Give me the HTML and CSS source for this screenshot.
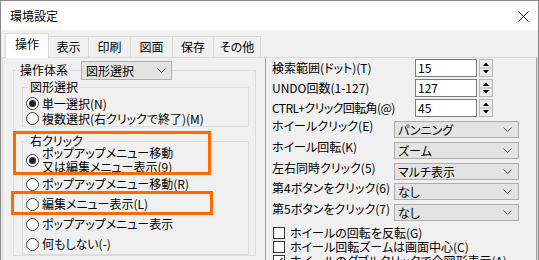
FILE: index.html
```html
<!DOCTYPE html>
<html lang="ja">
<head>
<meta charset="utf-8">
<title>環境設定</title>
<link rel="stylesheet" href="styles.css">
</head>
<body>
<div class="window">
  <div class="titlebar">
    <span class="title">環境設定</span>
    <svg class="close" width="11" height="11" viewBox="0 0 11 11"><path d="M0.5 0.5L10.5 10.5M10.5 0.5L0.5 10.5" stroke="#000" stroke-width="1" fill="none"/></svg>
  </div>
  <div class="client">
    <div class="tabs">
      <div class="tab active w-a">操作</div>
      <div class="tab w-b">表示</div>
      <div class="tab w-c">印刷</div>
      <div class="tab w-c">図面</div>
      <div class="tab w-d">保存</div>
      <div class="tab w-e">その他</div>
    </div>
    <div class="panel">
      <div class="left">
        <div class="combo system">
          <span>図形選択</span>
          <svg class="chev" width="9" height="5" viewBox="0 0 9 5"><polyline points="0.5,0.5 4.5,4.5 8.5,0.5" fill="none" stroke="#555" stroke-width="1"/></svg>
        </div>
        <fieldset class="group outer">
          <legend>操作体系</legend>
          <fieldset class="group inner sel">
            <legend>図形選択</legend>
            <div class="radio"><span class="rb on"></span><span>単一選択(N)</span></div>
            <div class="radio"><span class="rb"></span><span>複数選択(右クリックで終了)(M)</span></div>
          </fieldset>
          <fieldset class="group inner rclick">
            <legend>右クリック</legend>
            <div class="radio multi"><span class="rb on"></span><span>ポップアップメニュー移動<br>又は編集メニュー表示(9)</span></div>
            <div class="radio tall"><span class="rb"></span><span>ポップアップメニュー移動(R)</span></div>
            <div class="radio tall"><span class="rb"></span><span>編集メニュー表示(L)</span></div>
            <div class="radio tall"><span class="rb"></span><span>ポップアップメニュー表示</span></div>
            <div class="radio tall"><span class="rb"></span><span>何もしない(-)</span></div>
          </fieldset>
        </fieldset>
      </div>
      <div class="right">
        <div class="num-row first">
          <span class="nlabel">検索範囲(ドット)(T)</span>
          <span class="edit">15</span>
          <svg class="spin" width="14" height="18" viewBox="0 0 14 18"><rect x="0.5" y="0.5" width="13" height="17" fill="#ececec" stroke="#b9b9b9"/><line x1="1" y1="9" x2="13" y2="9" stroke="#b9b9b9"/><path d="M4 7H10L7 3.5Z" fill="#000"/><path d="M4 11H10L7 14.5Z" fill="#000"/></svg>
        </div>
        <div class="num-row">
          <span class="nlabel">UNDO回数(1-127)</span>
          <span class="edit">127</span>
          <svg class="spin" width="14" height="18" viewBox="0 0 14 18"><rect x="0.5" y="0.5" width="13" height="17" fill="#ececec" stroke="#b9b9b9"/><line x1="1" y1="9" x2="13" y2="9" stroke="#b9b9b9"/><path d="M4 7H10L7 3.5Z" fill="#000"/><path d="M4 11H10L7 14.5Z" fill="#000"/></svg>
        </div>
        <div class="num-row">
          <span class="nlabel tight">CTRL+クリック回転角(@)</span>
          <span class="edit">45</span>
          <svg class="spin" width="14" height="18" viewBox="0 0 14 18"><rect x="0.5" y="0.5" width="13" height="17" fill="#ececec" stroke="#b9b9b9"/><line x1="1" y1="9" x2="13" y2="9" stroke="#b9b9b9"/><path d="M4 7H10L7 3.5Z" fill="#000"/><path d="M4 11H10L7 14.5Z" fill="#000"/></svg>
        </div>
        <div class="dd-row first">
          <span class="dlabel">ホイールクリック(E)</span>
          <div class="combo dd"><span>パンニング</span><svg class="chev" width="9" height="5" viewBox="0 0 9 5"><polyline points="0.5,0.5 4.5,4.5 8.5,0.5" fill="none" stroke="#555" stroke-width="1"/></svg></div>
        </div>
        <div class="dd-row">
          <span class="dlabel">ホイール回転(K)</span>
          <div class="combo dd"><span>ズーム</span><svg class="chev" width="9" height="5" viewBox="0 0 9 5"><polyline points="0.5,0.5 4.5,4.5 8.5,0.5" fill="none" stroke="#555" stroke-width="1"/></svg></div>
        </div>
        <div class="dd-row">
          <span class="dlabel">左右同時クリック(5)</span>
          <div class="combo dd"><span>マルチ表示</span><svg class="chev" width="9" height="5" viewBox="0 0 9 5"><polyline points="0.5,0.5 4.5,4.5 8.5,0.5" fill="none" stroke="#555" stroke-width="1"/></svg></div>
        </div>
        <div class="dd-row">
          <span class="dlabel">第4ボタンをクリック(6)</span>
          <div class="combo dd"><span>なし</span><svg class="chev" width="9" height="5" viewBox="0 0 9 5"><polyline points="0.5,0.5 4.5,4.5 8.5,0.5" fill="none" stroke="#555" stroke-width="1"/></svg></div>
        </div>
        <div class="dd-row">
          <span class="dlabel">第5ボタンをクリック(7)</span>
          <div class="combo dd"><span>なし</span><svg class="chev" width="9" height="5" viewBox="0 0 9 5"><polyline points="0.5,0.5 4.5,4.5 8.5,0.5" fill="none" stroke="#555" stroke-width="1"/></svg></div>
        </div>
        <div class="checks">
          <div class="check"><span class="cb"></span><span>ホイールの回転を反転(G)</span></div>
          <div class="check"><span class="cb"></span><span>ホイール回転ズームは画面中心(C)</span></div>
          <div class="check"><span class="cb"><svg width="10" height="10" viewBox="0 0 10 10"><polyline points="1.5,5 4,7.5 8.5,2" fill="none" stroke="#333" stroke-width="1.3"/></svg></span><span>ホイールのダブルクリックで全図形表示(A)</span></div>
        </div>
      </div>
    </div>
  </div>
  <div class="mark mark1"></div>
  <div class="mark mark2"></div>
</div>
</body>
</html>
```
FILE: styles.css
```css
* { box-sizing: border-box; }
html, body { margin: 0; padding: 0; }
body {
  width: 539px;
  height: 260px;
  overflow: hidden;
  background: #fff;
  font-family: "Noto Sans CJK JP", "Noto Sans", sans-serif;
  font-size: 12px;
  color: #000;
  font-feature-settings: "palt";
}
.window {
  position: relative;
  width: 539px;
  height: 260px;
  border: 1px solid #8a8a8a;
  border-bottom: none;
  background: #f0f0f0;
  display: flex;
  flex-direction: column;
  overflow: hidden;
}
.titlebar {
  height: 29px;
  flex: none;
  background: #fff;
  display: flex;
  align-items: center;
  justify-content: space-between;
  padding: 0 9px;
}
.title { line-height: 14px; }
.close { display: block; margin-top: 2px; }
.client {
  flex: 1;
  display: flex;
  flex-direction: column;
  padding: 3px 0 0 1px;
  min-height: 0;
}
.tabs {
  display: flex;
  align-items: flex-end;
  height: 24px;
  padding-left: 3px;
  flex: none;
}
.tab {
  height: 21px;
  border: 1px solid #d9d9d9;
  border-bottom: none;
  background: #f0f0f0;
  text-align: center;
  line-height: 14px;
  padding-top: 3px;
  margin-left: -1px;
}
.tab.active {
  height: 25px;
  margin-bottom: -1px;
  margin-left: 0;
  background: #fff;
  position: relative;
  z-index: 1;
  padding-top: 3px;
}
.w-a { width: 44px; }
.w-b { width: 41px; }
.w-c { width: 43px; }
.w-d { width: 42px; }
.w-e { width: 48px; }
.panel {
  flex: 1;
  display: flex;
  border: 1px solid #d9d9d9;
  border-bottom: none;
  background: #f0f0f0;
  min-height: 0;
}
.left {
  width: 262px;
  flex: none;
  position: relative;
  padding-left: 10px;
}
.group {
  border: 1px solid #dcdcdc;
  margin: 0;
  min-width: 0;
}
.group legend {
  line-height: 14px;
  padding: 0 2px;
}
.outer {
  width: 243px;
  margin-top: 5px;
  padding: 0 6px 0 8px;
}
.outer > legend { margin-left: -4px; }
.inner { padding: 0 0 0 3px; }
.inner > legend { margin-left: 2px; }
.sel { margin-top: 3px; padding-top: 2px; }
.rclick { margin-top: 7px; }
.radio {
  display: flex;
  align-items: center;
  height: 15px;
  line-height: 14px;
  white-space: nowrap;
}
.radio.multi {
  height: 28px;
  line-height: 14px;
  margin-top: -2px;
}
.radio.tall { height: 20px; }
.rb {
  width: 13px;
  height: 13px;
  flex: none;
  border: 1px solid #333;
  border-radius: 50%;
  background: #fff;
  margin-right: 3px;
  display: flex;
  align-items: center;
  justify-content: center;
}
.rb.on::after {
  content: "";
  width: 7px;
  height: 7px;
  border-radius: 50%;
  background: #222;
}
.combo {
  display: flex;
  align-items: center;
  justify-content: space-between;
  background: #e3e3e3;
  border: 1px solid #adadad;
  line-height: 15px;
  white-space: nowrap;
}
.combo .chev { display: block; flex: none; }
.system {
  position: absolute;
  top: 3px;
  left: 78px;
  width: 91px;
  height: 19px;
  padding: 0 5px 0 4px;
  z-index: 1;
}
.right {
  flex: 1;
  border-left: 1px solid #a0a0a0;
  border-right: 1px solid #a0a0a0;
  padding: 1px 0 0 6px;
  min-width: 0;
}
.num-row {
  display: flex;
  align-items: center;
  height: 18px;
  margin-top: 2px;
}
.num-row.first { margin-top: 0; }
.nlabel {
  width: 143px;
  flex: none;
  white-space: nowrap;
  line-height: 14px;
}
.nlabel.tight { letter-spacing: -0.6px; }
.edit {
  width: 62px;
  height: 18px;
  flex: none;
  background: #fff;
  border: 1px solid #7a7a7a;
  padding-left: 2px;
  line-height: 16px;
}
.spin { display: block; margin-left: 2px; flex: none; }
.dd-row {
  display: flex;
  align-items: flex-start;
  height: 17px;
  margin-top: 3.75px;
}
.dd-row.first { margin-top: 4px; }
.dlabel {
  width: 122px;
  flex: none;
  white-space: nowrap;
  line-height: 14px;
  margin-top: -2px;
}
.dd {
  width: 125px;
  height: 17px;
  padding: 0 6px 0 3px;
  flex: none;
}
.checks { margin-top: 5px; }
.check {
  display: flex;
  align-items: center;
  height: 14px;
  line-height: 14px;
  white-space: nowrap;
}
.cb {
  width: 12px;
  height: 12px;
  flex: none;
  margin-left: 1px;
  margin-right: 5px;
  border: 1px solid #333;
  background: #fff;
  display: flex;
  align-items: center;
  justify-content: center;
}
.cb svg { display: block; }
.mark {
  position: absolute;
  border: 3px solid #ff6a00;
  z-index: 5;
}
.mark1 { left: 12px; top: 130px; width: 198px; height: 44px; }
.mark2 { left: 10px; top: 190px; width: 202px; height: 24px; }
```
